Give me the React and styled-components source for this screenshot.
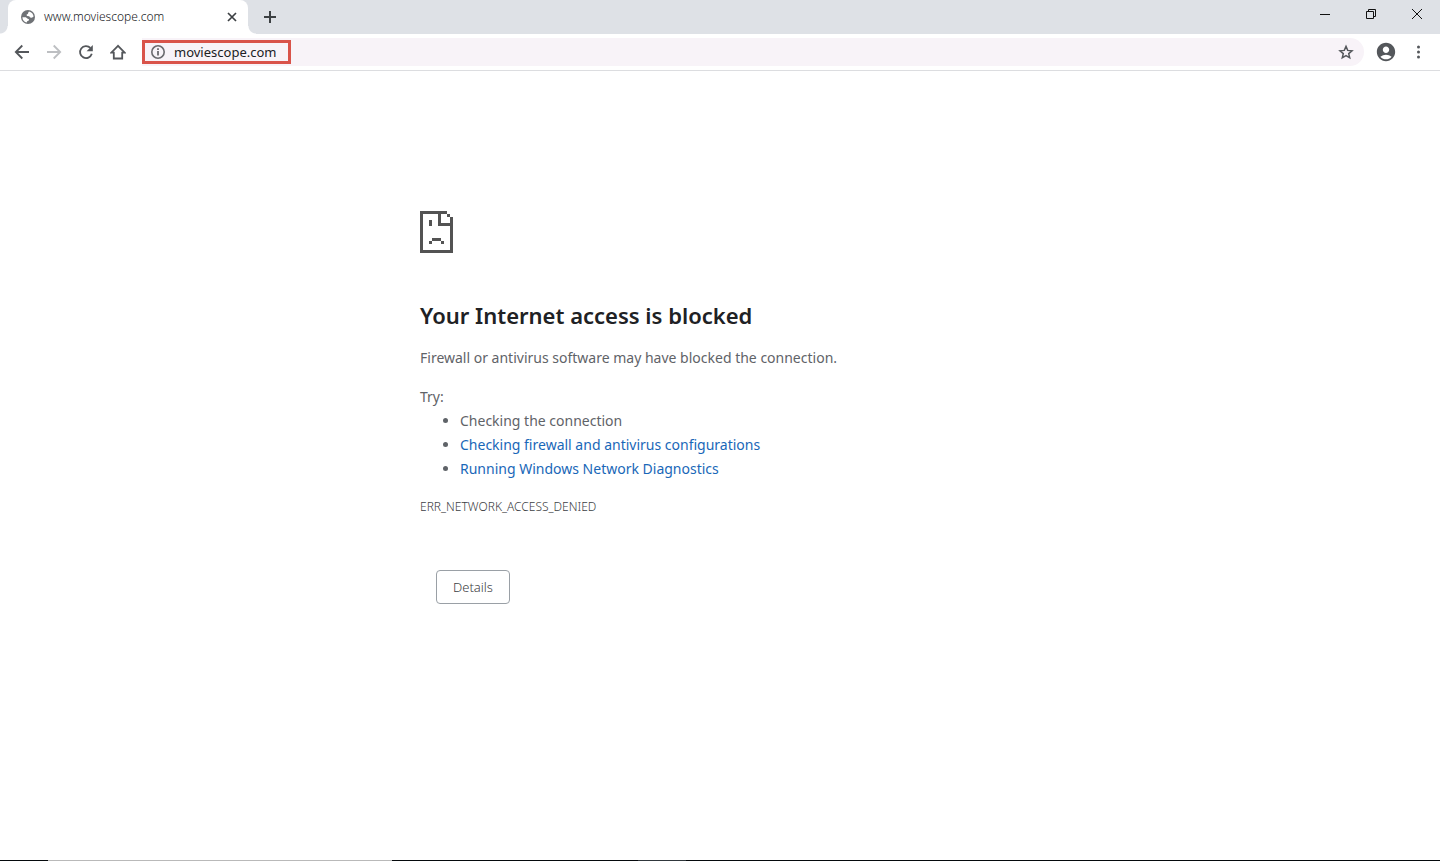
import React from 'react';
import styled, { createGlobalStyle } from 'styled-components';
import { MdAccountCircle } from 'react-icons/md';

const GlobalStyles = createGlobalStyle`
  * {
    box-sizing: border-box;
  }

  body {
    margin: 0;
    background: #ffffff;
    color: #5f6368;
    font-family: "Noto Sans", "Open Sans", sans-serif;
    font-size: 14px;
  }

  button,
  input {
    font-family: inherit;
  }
`;

const Window = styled.div`
  display: flex;
  flex-direction: column;
  min-height: 100vh;
`;

const TitleBar = styled.header`
  display: flex;
  height: 34px;
  background: #dee1e6;
`;

const Tab = styled.div`
  display: flex;
  align-items: center;
  width: 240px;
  padding: 0 8px 0 12px;
  border-radius: 8px 8px 0 0;
  background: #ffffff;
  color: #202124;
`;

// the small outward curve where a tab meets the toolbar
const TabFoot = styled.div`
  align-self: flex-end;
  width: 8px;
  height: 8px;
  background: radial-gradient(
    circle at top ${({ $side }) => $side},
    transparent 7px,
    #ffffff 8px
  );
`;

const TabTitle = styled.span`
  flex: 1;
  margin-left: 8px;
  font-size: 12px;
  font-weight: 300;
  line-height: 16px;
`;

const IconButton = styled.button`
  display: flex;
  align-items: center;
  justify-content: center;
  flex: none;
  width: ${({ $width }) => $width || 32}px;
  height: ${({ $height }) => $height || 32}px;
  padding: 0;
  border: none;
  background: none;
  color: ${({ $color }) => $color || '#54575b'};
`;

const WindowControls = styled.div`
  display: flex;
  margin-left: auto;
`;

const Toolbar = styled.nav`
  display: flex;
  align-items: center;
  height: 37px;
  padding: 0 6px;
  border-bottom: 1px solid #dcdde0;
  background: #ffffff;
`;

const AddressBar = styled.div`
  display: flex;
  align-items: center;
  flex: 1;
  height: 28px;
  margin: 0 6px 0 8px;
  border-radius: 0 14px 14px 0;
  background: #f8f3f8;
`;

const Highlight = styled.label`
  display: flex;
  align-items: center;
  gap: 8px;
  width: 149px;
  height: 24px;
  padding-left: 5px;
  border: 3px solid #d9534a;
  color: #6a6a6e;
`;

const AddressInput = styled.input`
  flex: 1;
  min-width: 0;
  padding: 0;
  border: none;
  outline: none;
  background: none;
  color: #202124;
  font-size: 13px;
  line-height: 18px;
`;

const Spacer = styled.div`
  flex: 1;
`;

const Main = styled.main`
  flex: 1;
  width: 100%;
  max-width: 600px;
  margin: 0 auto;
  padding-top: 140px;
  line-height: 24px;
`;

const PageIcon = styled.svg`
  display: block;
  width: 33px;
  height: 42px;
  fill: #535353;
`;

const Title = styled.h1`
  margin: 47px 0 16px;
  color: #202124;
  font-size: 22px;
  font-weight: 600;
  line-height: 30px;
`;

const Text = styled.p`
  margin: 0 0 15px;
`;

const Suggestions = styled.div`
  margin-bottom: 16px;
`;

const List = styled.ul`
  margin: 0;
  padding-left: 40px;
`;

const HelpLink = styled.a`
  color: #1967b8;
  text-decoration: none;
`;

const ErrorCode = styled.div`
  color: #3c4043;
  font-size: 12px;
  font-weight: 300;
  line-height: 20px;
`;

const DetailsButton = styled.button`
  height: 34px;
  margin: 53px 0 0 16px;
  padding: 0 16px;
  border: 1px solid #9aa0a6;
  border-radius: 4px;
  background: #ffffff;
  color: #3c4043;
  font-size: 13px;
  font-weight: 300;
  line-height: 20px;
`;

const TaskbarEdge = styled.footer`
  display: flex;
  height: 1px;
  background: #05090c;
`;

const EdgeSegment = styled.div`
  width: ${({ $width }) => $width}px;
  background: ${({ $color }) => $color || 'transparent'};
`;

const SadPage = () => (
  <PageIcon viewBox="0 0 11 14" shapeRendering="crispEdges" aria-hidden="true">
    <path d="M0 0h9v1h1v1h1v12H0zM1 1v12h9V5H6V1zM7 1v3h3V2H9V1z" fillRule="evenodd" />
    <path d="M3 3h1v2H3zM4 9h3v1H4zM3 10h1v1H3zM7 10h1v1H7z" />
  </PageIcon>
);

const GlobeIcon = () => (
  <svg width="16" height="16" viewBox="0 0 16 16" aria-hidden="true">
    <circle cx="8" cy="8" r="7" fill="#6f7276" />
    <g fill="#ffffff">
      <path d="M9 2.4c2.6.4 4.500 2.700 4.600 5.200l-1.700 1.200-1.800-.3-.9-1.300-2.200-.3-.5-1.200 1.500-.9.3-1.200z" />
      <path d="M2.400 8.200h3.400l1.900 1.500 1.300.5-.2 1.300-1.600.8-.4 1.300c-2.500-.5-4.400-2.700-4.400-5.400z" />
    </g>
  </svg>
);

const CloseTabIcon = () => (
  <svg width="10" height="10" viewBox="0 0 10 10" fill="none" stroke="currentColor" strokeWidth="1.7">
    <path d="M1 1l8 8M9 1L1 9" />
  </svg>
);

const PlusIcon = () => (
  <svg width="12" height="12" viewBox="0 0 12 12" fill="none" stroke="currentColor" strokeWidth="2">
    <path d="M6 0v12M0 6h12" />
  </svg>
);

const WindowIcon = ({ d }) => (
  <svg width="12" height="12" viewBox="0 0 12 12" fill="none" stroke="currentColor">
    <path d={d} />
  </svg>
);

const ToolbarIcon = ({ children }) => (
  <svg
    width="16"
    height="16"
    viewBox="0 0 16 16"
    fill="none"
    stroke="currentColor"
    strokeWidth="1.8"
    aria-hidden="true"
  >
    {children}
  </svg>
);

const windowButtons = [
  { label: 'Minimize', d: 'M1 6.5h10' },
  { label: 'Restore', d: 'M1.5 3.5h7v7h-7zM3.5 3.5v-2h7v7h-2' },
  { label: 'Close', d: 'M1 1l10 10M11 1L1 11' },
];

const App = () => {
  return (
    <>
      <GlobalStyles />
      <Window>
        <TitleBar>
          <TabFoot $side="left" />
          <Tab>
            <GlobeIcon />
            <TabTitle>www.moviescope.com</TabTitle>
            <IconButton $width={16} $height={16} $color="#3c4043" aria-label="Close tab">
              <CloseTabIcon />
            </IconButton>
          </Tab>
          <TabFoot $side="right" />
          <IconButton $width={28} $height={34} $color="#3c4043" aria-label="New tab">
            <PlusIcon />
          </IconButton>
          <WindowControls>
            {windowButtons.map(({ label, d }) => (
              <IconButton key={label} $width={46} $height={28} $color="#111111" aria-label={label}>
                <WindowIcon d={d} />
              </IconButton>
            ))}
          </WindowControls>
        </TitleBar>
        <Toolbar>
          <IconButton aria-label="Back">
            <ToolbarIcon>
              <path d="M15 8H2.5M8.3 1.5L1.8 8l6.5 6.5" />
            </ToolbarIcon>
          </IconButton>
          <IconButton $color="#bdbfc2" aria-label="Forward">
            <ToolbarIcon>
              <path d="M1 8h12.5M7.7 1.5L14.2 8l-6.500 6.500" />
            </ToolbarIcon>
          </IconButton>
          <IconButton aria-label="Reload">
            <ToolbarIcon>
              <path d="M13.8 9.8A6 6 0 1 1 12.4 3.9" />
              <path d="M14.8 1v6.2H8.6z" fill="currentColor" stroke="none" />
            </ToolbarIcon>
          </IconButton>
          <IconButton aria-label="Home">
            <ToolbarIcon>
              <path d="M8 1.800L1.300 8.600h2.500v5.900h8.400V8.600h2.500z" />
            </ToolbarIcon>
          </IconButton>
          <AddressBar>
            <Highlight>
              <ToolbarIcon>
                <circle cx="8" cy="8" r="6.2" strokeWidth="1.6" />
                <path d="M8 7v4.5M8 4.3V6" />
              </ToolbarIcon>
              <AddressInput type="text" aria-label="Address" defaultValue="moviescope.com" />
            </Highlight>
            <Spacer />
            <IconButton $width={36} $height={28} aria-label="Bookmark this page">
              <ToolbarIcon>
                <path
                  d="M8 2.4l1.7 4 4.3.4-3.3 2.8 1 4.2L8 11.6l-3.7 2.2 1-4.2L2 6.8l4.3-.4z"
                  strokeWidth="1.5"
                />
              </ToolbarIcon>
            </IconButton>
          </AddressBar>
          <IconButton aria-label="Profile">
            <MdAccountCircle size={22} />
          </IconButton>
          <IconButton aria-label="Menu">
            <ToolbarIcon>
              <g fill="currentColor" stroke="none">
                <circle cx="8.5" cy="3" r="1.5" />
                <circle cx="8.5" cy="8" r="1.5" />
                <circle cx="8.5" cy="13" r="1.5" />
              </g>
            </ToolbarIcon>
          </IconButton>
        </Toolbar>
        <Main>
          <SadPage />
          <Title>Your Internet access is blocked</Title>
          <Text>Firewall or antivirus software may have blocked the connection.</Text>
          <Suggestions>
            Try:
            <List>
              <li>Checking the connection</li>
              <li>
                <HelpLink href="#buttons">Checking firewall and antivirus configurations</HelpLink>
              </li>
              <li>
                <HelpLink href="#diagnose">Running Windows Network Diagnostics</HelpLink>
              </li>
            </List>
          </Suggestions>
          <ErrorCode>ERR_NETWORK_ACCESS_DENIED</ErrorCode>
          <DetailsButton>Details</DetailsButton>
        </Main>
        <TaskbarEdge>
          <EdgeSegment $width={48} />
          <EdgeSegment $width={344} $color="#b9b9b9" />
          <EdgeSegment $width={246} />
          <EdgeSegment $width={48} $color="#30373c" />
        </TaskbarEdge>
      </Window>
    </>
  );
};

export default App;
